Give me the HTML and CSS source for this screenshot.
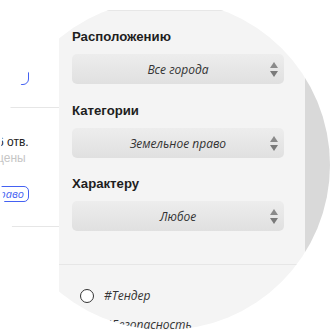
FILE: index.html
```html
<!DOCTYPE html>
<html lang="ru">
<head>
<meta charset="utf-8">
<title>Фильтры</title>
<link rel="stylesheet" href="styles.css">
</head>
<body>
<div class="lens">
  <div class="page">
    <div class="feed">
      <div class="btn-outline"></div>
      <div class="rule rule-a"></div>
      <div class="meta">6 отв.</div>
      <div class="meta muted">цены</div>
      <div class="tag">Земельное право</div>
      <div class="rule rule-b"></div>
    </div>
    <aside class="filters">
      <div class="groups">
        <section class="group">
          <h3 class="label">Расположению</h3>
          <div class="select">
            <span class="select-text">Все города</span>
            <span class="arrows"><i class="up"></i><i class="down"></i></span>
          </div>
        </section>
        <section class="group">
          <h3 class="label">Категории</h3>
          <div class="select">
            <span class="select-text">Земельное право</span>
            <span class="arrows"><i class="up"></i><i class="down"></i></span>
          </div>
        </section>
        <section class="group">
          <h3 class="label">Характеру</h3>
          <div class="select">
            <span class="select-text">Любое</span>
            <span class="arrows"><i class="up"></i><i class="down"></i></span>
          </div>
        </section>
      </div>
      <ul class="hashtags">
        <li class="hashtag"><span class="radio"></span><span class="hashtag-text">#Тендер</span></li>
        <li class="hashtag"><span class="radio"></span><span class="hashtag-text">#Безопасность</span></li>
      </ul>
    </aside>
    <div class="track"></div>
  </div>
</div>
</body>
</html>
```

FILE: styles.css
```css
html, body {
  margin: 0;
  padding: 0;
  background: #ffffff;
}

.lens {
  width: 330px;
  height: 330px;
  border-radius: 50%;
  overflow: hidden;
  background: #ffffff;
}

.page {
  display: flex;
  height: 330px;
}

/* left page content */
.feed {
  flex: none;
  width: 59px;
  display: flex;
  flex-direction: column;
  align-items: flex-start;
  font-family: "Liberation Sans", Arial, sans-serif;
}

.btn-outline {
  align-self: flex-end;
  flex: none;
  margin-top: 58px;
  margin-right: 30px;
  width: 100px;
  height: 27px;
  box-sizing: border-box;
  border: 1.5px solid #4461f2;
  border-radius: 6px;
}

.rule {
  align-self: stretch;
  height: 1px;
  background: #e6e6e6;
}

.rule-a { margin-top: 22px; }

.meta {
  margin-left: -3px;
  font-size: 12px;
  line-height: 16px;
  color: #222222;
  white-space: nowrap;
}

.rule-a + .meta { margin-top: 26px; }

.muted { color: #c6c6c6; }

.tag {
  align-self: flex-end;
  flex: none;
  margin-top: 20px;
  margin-right: 30px;
  height: 16px;
  box-sizing: border-box;
  padding: 0 4px;
  border: 1.3px solid #4461f2;
  border-radius: 5px;
  font-family: "Open Sans", sans-serif;
  font-style: italic;
  font-size: 11px;
  line-height: 13px;
  color: #4461f2;
  white-space: nowrap;
}

.rule-b { margin-top: 24px; }

/* filter panel */
.filters {
  flex: none;
  width: 246px;
  margin-top: 10px;
  background: #f4f4f4;
  border-top: 1px solid #e7e7e7;
}

.groups {
  padding: 18px 21px 33px 13px;
  border-bottom: 1px solid #e6e6e6;
}

.group + .group { margin-top: 19px; }
.group:last-child { margin-top: 18px; }

.label {
  margin: 0;
  font-family: "Liberation Sans", Arial, sans-serif;
  font-weight: 700;
  font-size: 13.2px;
  line-height: 16px;
  color: #1e1e1e;
}

.select {
  margin-top: 9px;
  height: 30px;
  border-radius: 5px;
  background: linear-gradient(#ededed, #e0e0e0);
  display: grid;
  grid-template-columns: 20px 1fr 20px;
  align-items: center;
}

.select-text {
  grid-column: 2;
  text-align: center;
  font-family: "Open Sans", sans-serif;
  font-style: italic;
  font-size: 12px;
  color: #333333;
  white-space: nowrap;
}

.arrows {
  grid-column: 3;
  display: flex;
  flex-direction: column;
  align-items: center;
  gap: 3px;
  padding-right: 1px;
}

.arrows i {
  display: block;
  width: 0;
  height: 0;
  border-left: 4px solid transparent;
  border-right: 4px solid transparent;
}

.arrows .up { border-bottom: 6px solid #8a8a8a; }
.arrows .down { border-top: 6px solid #7a7a7a; }

.hashtags {
  list-style: none;
  margin: 0;
  padding: 16px 0 0 21px;
}

.hashtag {
  display: flex;
  align-items: center;
  gap: 10px;
  height: 29px;
}

.radio {
  flex: none;
  width: 14px;
  height: 14px;
  box-sizing: border-box;
  border: 1.5px solid #333333;
  border-radius: 50%;
  background: #ffffff;
}

.hashtag-text {
  font-family: "Open Sans", sans-serif;
  font-style: italic;
  font-size: 12px;
  color: #333333;
}

.track {
  flex: 1;
  margin-top: 10px;
  background: #d9d9d9;
}
```
